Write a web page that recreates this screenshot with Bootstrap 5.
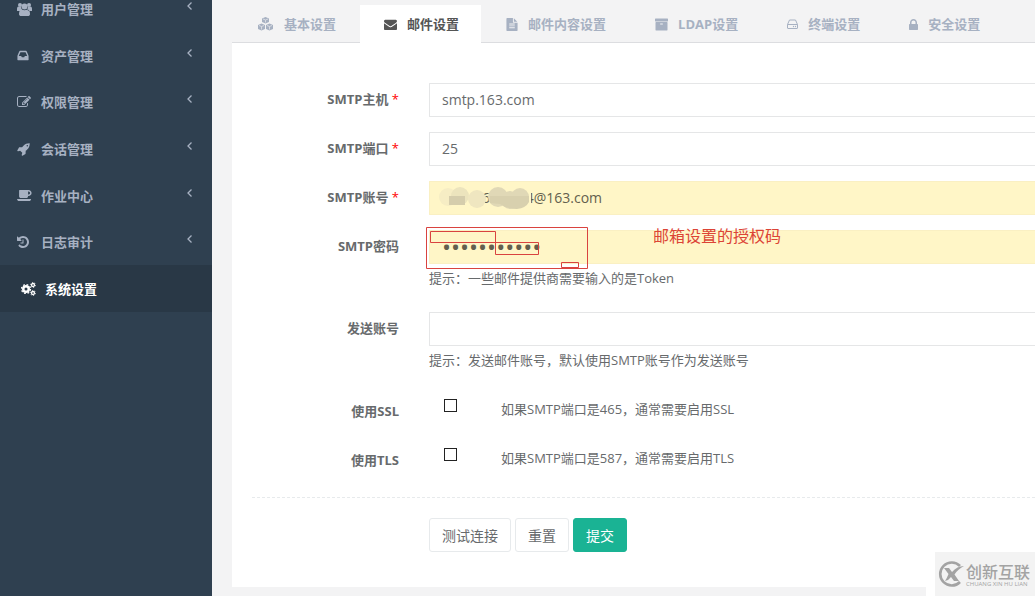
<!DOCTYPE html>
<html lang="zh-CN">
<head>
<meta charset="utf-8">
<meta name="viewport" content="width=device-width, initial-scale=1">
<title>系统设置 - 邮件设置</title>
<link href="https://cdn.jsdelivr.net/npm/bootstrap@5.3.0/dist/css/bootstrap.min.css" rel="stylesheet">
<script defer src="https://cdn.jsdelivr.net/npm/bootstrap@5.3.0/dist/js/bootstrap.bundle.min.js"></script>
<style>
  body { font-family: "Open Sans", "Noto Sans CJK SC", sans-serif; font-size: 13px; line-height: 18px; color: #676a6c; background: #f3f3f4; overflow: hidden; }
  svg { fill: currentColor; flex: none; }
  .sidebar { width: 212px; background: #2f4050; }
  .side-menu { height: 326px; margin-top: -14px; }
  .side-menu a { color: #a7b1c2; font-weight: 600; padding: 0 19px 0 17px; }
  .side-menu .active a { color: #fff; background: #293846; padding-left: 21px; }
  .menu-icon { width: 24px; }
  .chevron { margin-bottom: 6px; }
  .content { padding-left: 20px; }
  .tab-bar { height: 43px; border-bottom: 1px solid #dcdde0; padding-top: 5px; }
  .tab-bar .nav-link { color: #a7b1c2; font-weight: 700; padding: 0 24px 0 25px; gap: 10px; height: 38px; border: 0; border-radius: 0; }
  .tab-bar .nav-link.active { color: #555; background: #fff; padding: 0 22px 0 24px; }
  .panel { padding: 40px 0 35px 20px; }
  .form-line { gap: 30px; margin-bottom: 15px; }
  .line-label { width: 147px; padding-top: 7px; text-align: right; font-weight: 700; }
  .toggle-line .line-label { padding-top: 8px; }
  .req { color: #f00; font-weight: 400; }
  .field { height: 34px; padding: 5px 12px 7px; font-size: 14px; line-height: 20px; color: #676a6c; border: 1px solid #e5e6e7; border-right: 0; border-radius: 1px 0 0 1px; }
  .field.filled { background: #fff6c7; border-color: #faf0c3; color: #635f4e; }
  .field[type=password] { font-size: 24px; }
  .hint { margin: 5px 0 10px; }
  .tick { width: 13px; height: 13px; margin: 5px 44px 0 15px; appearance: none; border: 1px solid #222; background: #fff; border-radius: 0; }
  .tick:checked { background: #1ab394; }
  .toggle-line { height: 34px; }
  .toggle-line .hint { margin: 6px 0 0; }
  .rule { border-top: 1px dashed #e7eaec; margin: 20px 0; }
  .actions { gap: 4px; padding-left: 177px; }
  .actions .btn { height: 34px; padding: 0 12px; font-size: 14px; border-radius: 3px; }
  .btn-plain { color: #676a6c; background: #fff; border-color: #e7eaec; }
  .btn-send { color: #fff; background: #1ab394; border-color: #1ab394; }
  .smudge { left: 8px; top: 3px; }
  .marks { left: -3px; top: -4px; color: #d9433f; }
  .note { left: 224px; top: -4px; font-size: 16px; line-height: 20px; color: #dc4436; }
  .brand-stamp { right: 0; bottom: 0; width: 109px; height: 44px; background: #f3f3f3; border-left: 9px solid #fff; color: #a3a3a3; padding-left: 2px; gap: 1px; }
  .brand-name { font-size: 16px; line-height: 24px; font-weight: 500; }
  .brand-sub { font-size: 6px; line-height: 8px; margin-top: -4px; }
</style>
</head>
<body>
<div class="d-flex vh-100">
  <nav class="sidebar flex-shrink-0 overflow-hidden" aria-label="主菜单">
    <ul class="side-menu list-unstyled d-flex flex-column mb-0">
      <li class="flex-fill d-flex"><a href="#" class="d-flex w-100 align-items-center text-decoration-none">
        <span class="menu-icon d-flex"><svg width="15" height="14" viewBox="0 0 30 28"><circle cx="6" cy="6" r="4"/><circle cx="24" cy="6" r="4"/><circle cx="15" cy="9" r="6"/><path d="M0 18v-4c0-3 1-5 3-5 2 1 4 1 5 0 0 3 1 5 3 7-2 0-4 1-5 2H2zM30 18v-4c0-3-1-5-3-5-2 1-4 1-5 0 0 3-1 5-3 7 2 0 4 1 5 2h4zM4 24c0-6 2-9 6-9 3 2 7 2 10 0 4 0 6 3 6 9 0 3-2 4-4 4H8c-2 0-4-1-4-4z"/></svg></span>用户管理
        <svg class="chevron ms-auto" width="7" height="10" viewBox="0 0 7 10"><path d="M5.500 1.500 2 5l3.500 3.500" fill="none" stroke="currentColor" stroke-width="1.300"/></svg></a></li>
      <li class="flex-fill d-flex"><a href="#" class="d-flex w-100 align-items-center text-decoration-none">
        <span class="menu-icon d-flex"><svg width="12" height="13" viewBox="128 0 1536 1792"><path d="M1151 960h316q-1-3-2.500-8t-2.500-8l-212-496h-708l-212 496q-1 2-2.500 8t-2.500 8h316l95 192h320zm513 30v482q0 26-19 45t-45 19h-1408q-26 0-45-19t-19-45v-482q0-62 25-123l238-552q10-25 36.500-42t52.500-17h832q26 0 52.500 17t36.500 42l238 552q25 61 25 123z"/></svg></span>资产管理
        <svg class="chevron ms-auto" width="7" height="10" viewBox="0 0 7 10"><path d="M5.500 1.500 2 5l3.500 3.500" fill="none" stroke="currentColor" stroke-width="1.300"/></svg></a></li>
      <li class="flex-fill d-flex"><a href="#" class="d-flex w-100 align-items-center text-decoration-none">
        <span class="menu-icon d-flex"><svg width="14" height="14" viewBox="0 0 1792 1792"><path d="M888 1184l116-116-152-152-116 116v56h96v96h56zm440-720q-16-16-33 1l-350 350q-17 17-1 33t33-1l350-350q17-17 1-33zm80 594v190q0 119-84.500 203.500t-203.500 84.500h-832q-119 0-203.500-84.500t-84.500-203.500v-832q0-119 84.500-203.500t203.500-84.500h832q63 0 117 25 15 7 18 23 3 17-9 29l-49 49q-14 14-32 8-23-6-45-6h-832q-66 0-113 47t-47 113v832q0 66 47 113t113 47h832q66 0 113-47t47-113v-126q0-13 9-22l64-64q15-15 35-7t20 29zm-96-738l288 288-672 672h-288v-288zm444 132l-92 92-288-288 92-92q28-28 68-28t68 28l152 152q28 28 28 68t-28 68z"/></svg></span>权限管理
        <svg class="chevron ms-auto" width="7" height="10" viewBox="0 0 7 10"><path d="M5.500 1.500 2 5l3.500 3.500" fill="none" stroke="currentColor" stroke-width="1.300"/></svg></a></li>
      <li class="flex-fill d-flex"><a href="#" class="d-flex w-100 align-items-center text-decoration-none">
        <span class="menu-icon d-flex"><svg width="13" height="13" viewBox="0 100 1700 1700"><path d="M1440 448q0-40-28-68t-68-28-68 28-28 68 28 68 68 28 68-28 28-68zm224-288q0 249-75.500 430.500t-253.500 360.500q-81 80-195 176l-20 379q-2 16-16 26l-384 224q-7 4-16 4-12 0-23-9l-64-64q-13-14-8-32l85-276-281-281-276 85q-3 1-9 1-14 0-23-9l-64-64q-17-19-5-39l224-384q10-14 26-16l379-20q96-114 176-195 188-187 358-258t431-71q14 0 24 9.500t10 22.500z"/></svg></span>会话管理
        <svg class="chevron ms-auto" width="7" height="10" viewBox="0 0 7 10"><path d="M5.500 1.500 2 5l3.500 3.500" fill="none" stroke="currentColor" stroke-width="1.300"/></svg></a></li>
      <li class="flex-fill d-flex"><a href="#" class="d-flex w-100 align-items-center text-decoration-none">
        <span class="menu-icon d-flex"><svg width="15" height="13" viewBox="0 128 1900 1664"><path d="M1664 640q0-80-56-136t-136-56h-64v384h64q80 0 136-56t56-136zm-1664 768h1792q0 106-75 181t-181 75h-1280q-106 0-181-75t-75-181zm1856-768q0 159-112.500 271.500t-271.500 112.500h-64v32q0 92-66 158t-158 66h-704q-92 0-158-66t-66-158v-736q0-26 19-45t45-19h1152q159 0 271.500 112.500t112.500 271.500z"/></svg></span>作业中心
        <svg class="chevron ms-auto" width="7" height="10" viewBox="0 0 7 10"><path d="M5.500 1.500 2 5l3.500 3.500" fill="none" stroke="currentColor" stroke-width="1.300"/></svg></a></li>
      <li class="flex-fill d-flex"><a href="#" class="d-flex w-100 align-items-center text-decoration-none">
        <span class="menu-icon d-flex"><svg width="12" height="12" viewBox="128 128 1536 1536"><path d="M1664 896q0 156-61 298t-164 245-245 164-298 61q-172 0-327-72.500t-264-204.500q-7-10-6.500-22.500t8.500-20.500l137-138q10-9 25-9 16 2 23 12 73 95 179 147t225 52q104 0 198.500-40.500t163.500-109.500 109.500-163.500 40.500-198.500-40.500-198.500-109.500-163.500-163.500-109.500-198.500-40.500q-98 0-188 35.500t-160 101.500l137 138q31 30 14 69-17 40-59 40h-448q-26 0-45-19t-19-45v-448q0-42 40-59 39-17 69 14l130 129q107-101 244.500-156.500t284.500-55.500q156 0 298 61t245 164 164 245 61 298zM960 608v448q0 14-9 23t-23 9h-320q-14 0-23-9t-9-23v-64q0-14 9-23t23-9h224v-352q0-14 9-23t23-9h64q14 0 23 9t9 23z"/></svg></span>日志审计
        <svg class="chevron ms-auto" width="7" height="10" viewBox="0 0 7 10"><path d="M5.500 1.500 2 5l3.500 3.500" fill="none" stroke="currentColor" stroke-width="1.300"/></svg></a></li>
      <li class="flex-fill d-flex active"><a href="#" aria-current="page" class="d-flex w-100 align-items-center text-decoration-none">
        <span class="menu-icon d-flex"><svg width="15" height="14" viewBox="0 0 30 28"><g fill="none" stroke="currentColor"><circle cx="10" cy="14" r="5.500" stroke-width="5"/><circle cx="10" cy="14" r="9" stroke-width="2.500" stroke-dasharray="3.500 3.570"/><circle cx="24" cy="6" r="3" stroke-width="2.600"/><circle cx="24" cy="6" r="5" stroke-width="1.600" stroke-dasharray="2.500 2.700"/><circle cx="24" cy="22" r="3" stroke-width="2.600"/><circle cx="24" cy="22" r="5" stroke-width="1.600" stroke-dasharray="2.500 2.700"/></g></svg></span>系统设置</a></li>
    </ul>
  </nav>

  <main class="content flex-grow-1 overflow-hidden">
    <ul class="nav tab-bar flex-nowrap text-nowrap">
      <li class="nav-item"><a href="#" class="nav-link d-flex align-items-center"><svg width="17" height="14" viewBox="0 0 32 28"><path d="M16 0l7 3v7l-7 3-7-3V3zM8 13l7 3v8l-7 3-7-3v-8zM24 13l7 3v8l-7 3-7-3v-8z"/><path d="M11 4l5 2 5-2M16 6.500V11M3 17l5 2 5-2M8 19.500V25M19 17l5 2 5-2M24 19.500V25" fill="none" stroke="#f3f3f4" stroke-width="1.300"/></svg>基本设置</a></li>
      <li class="nav-item"><a href="#" class="nav-link active d-flex align-items-center" aria-current="page"><svg width="13" height="13" viewBox="0 0 1792 1792"><path d="M1792 710v794q0 66-47 113t-113 47h-1472q-66 0-113-47t-47-113v-794q44 49 101 87 362 246 497 345 57 42 92.500 65.500t94.500 48 110 24.500h2q51 0 110-24.500t94.500-48 92.500-65.500q170-123 498-345 57-39 100-87zm0-294q0 79-49 151t-122 123q-376 261-468 325-10 7-42.500 31t-54 38.500-52 32.500-57.500 27-50 9h-2q-23 0-50-9t-57.500-27-52-32.500-54-38.500-42.500-31q-91-64-262-182.500t-205-142.500q-62-42-117-115.500t-55-136.500q0-78 41.500-130t118.500-52h1472q65 0 112.500 47t47.500 113z"/></svg>邮件设置</a></li>
      <li class="nav-item"><a href="#" class="nav-link d-flex align-items-center"><svg width="12" height="13" viewBox="128 0 1536 1792"><path d="M1596 476q14 14 28 36h-472v-472q22 14 36 28zm-476 164h544v1056q0 40-28 68t-68 28h-1344q-40 0-68-28t-28-68v-1600q0-40 28-68t68-28h800v544q0 40 28 68t68 28zm160 736v-64q0-14-9-23t-23-9h-704q-14 0-23 9t-9 23v64q0 14 9 23t23 9h704q14 0 23-9t9-23zm0-256v-64q0-14-9-23t-23-9h-704q-14 0-23 9t-9 23v64q0 14 9 23t23 9h704q14 0 23-9t9-23zm0-256v-64q0-14-9-23t-23-9h-704q-14 0-23 9t-9 23v64q0 14 9 23t23 9h704q14 0 23-9t9-23z"/></svg>邮件内容设置</a></li>
      <li class="nav-item"><a href="#" class="nav-link d-flex align-items-center"><svg width="13" height="13" viewBox="64 64 1664 1664"><path d="M1088 832q0-26-19-45t-45-19h-256q-26 0-45 19t-19 45 19 45 45 19h256q26 0 45-19t19-45zm576-192v960q0 26-19 45t-45 19h-1408q-26 0-45-19t-19-45v-960q0-26 19-45t45-19h1408q26 0 45 19t19 45zm64-448v256q0 26-19 45t-45 19h-1536q-26 0-45-19t-19-45v-256q0-26 19-45t45-19h1536q26 0 45 19t19 45z"/></svg>LDAP设置</a></li>
      <li class="nav-item"><a href="#" class="nav-link d-flex align-items-center"><svg width="11" height="12" viewBox="0 0 22 24"><path d="M5 4h12l4 9v7q0 1-1 1H2q-1 0-1-1v-7zM1 13h20" fill="none" stroke="currentColor" stroke-width="2"/><circle cx="13" cy="17" r="1.300"/><circle cx="17" cy="17" r="1.300"/></svg>终端设置</a></li>
      <li class="nav-item"><a href="#" class="nav-link d-flex align-items-center"><svg width="9" height="13" viewBox="320 0 1152 1664"><path d="M640 768h512v-192q0-106-75-181t-181-75-181 75-75 181v192zm832 96v576q0 40-28 68t-68 28h-960q-40 0-68-28t-28-68v-576q0-40 28-68t68-28h32v-192q0-184 132-316t316-132 316 132 132 316v192h32q40 0 68 28t28 68z"/></svg>安全设置</a></li>
    </ul>

    <form class="panel bg-white" onsubmit="return false">
      <div class="form-line d-flex">
        <label class="line-label flex-shrink-0" for="host">SMTP主机 <span class="req">*</span></label>
        <div class="flex-grow-1"><input id="host" type="text" class="form-control field" value="smtp.163.com"></div>
      </div>
      <div class="form-line d-flex">
        <label class="line-label flex-shrink-0" for="port">SMTP端口 <span class="req">*</span></label>
        <div class="flex-grow-1"><input id="port" type="text" class="form-control field" value="25"></div>
      </div>
      <div class="form-line d-flex">
        <label class="line-label flex-shrink-0" for="user">SMTP账号 <span class="req">*</span></label>
        <div class="flex-grow-1 position-relative"><input id="user" type="text" class="form-control field filled" value="00000600.004@163.com">
          <svg class="smudge position-absolute" width="96" height="28" viewBox="0 0 96 28" aria-hidden="true"><path fill="#fff6c7" d="M0 4h47v20H0zM53 4h41v20H53zM47 4h6v5h-6zM47 19h6v5h-6z"/><g fill="#ece4bd"><circle cx="11" cy="13" r="9" fill="#f6edc4"/><circle cx="23" cy="12" r="9"/><circle cx="40" cy="15" r="9" fill="#efe6c0"/></g><path fill="#d5cdac" d="M12 12h16v9H12z"/><g fill="#e0d8b6"><circle cx="61" cy="13" r="10"/><circle cx="73" cy="16" r="9"/><circle cx="83" cy="13" r="9"/></g><path fill="#d8d0ae" d="M53 12h39v6q-3 6-12 7-10 0-17-5l-10-1z"/></svg></div>
      </div>
      <div class="form-line d-flex">
        <label class="line-label flex-shrink-0" for="pass">SMTP密码</label>
        <div class="flex-grow-1 position-relative"><input id="pass" type="password" class="form-control field filled" value="abcdefghijk" autocomplete="off">
          <svg class="marks position-absolute" width="163" height="44" viewBox="0 0 163 44" aria-hidden="true"><g fill="none" stroke="currentColor"><path d="M.5 1.500h161v41H.5zM4.500 5.500h65v11h-65zM69.500 16.500h43v12h-43zM135.500 36.500h17v5h-17z"/></g></svg>
          <span class="note position-absolute text-nowrap">邮箱设置的授权码</span>
          <p class="hint">提示：一些邮件提供商需要输入的是Token</p></div>
      </div>
      <div class="form-line d-flex">
        <label class="line-label flex-shrink-0" for="from">发送账号</label>
        <div class="flex-grow-1"><input id="from" type="text" class="form-control field">
          <p class="hint">提示：发送邮件账号，默认使用SMTP账号作为发送账号</p></div>
      </div>
      <div class="form-line toggle-line d-flex">
        <label class="line-label flex-shrink-0" for="ssl">使用SSL</label>
        <div class="flex-grow-1 d-flex align-items-start"><input id="ssl" type="checkbox" class="tick"><p class="hint">如果SMTP端口是465，通常需要启用SSL</p></div>
      </div>
      <div class="form-line toggle-line d-flex mb-0">
        <label class="line-label flex-shrink-0" for="tls">使用TLS</label>
        <div class="flex-grow-1 d-flex align-items-start"><input id="tls" type="checkbox" class="tick"><p class="hint">如果SMTP端口是587，通常需要启用TLS</p></div>
      </div>
      <div class="rule"></div>
      <div class="actions d-flex">
        <button type="button" class="btn btn-plain">测试连接</button>
        <button type="reset" class="btn btn-plain">重置</button>
        <button type="submit" class="btn btn-send">提交</button>
      </div>
    </form>
  </main>
</div>
<div class="brand-stamp position-fixed d-flex align-items-center">
  <svg width="28" height="28" viewBox="0 0 28 28" aria-hidden="true"><path d="M23 6A11.500 11.500 0 1 0 23 22" fill="none" stroke="currentColor" stroke-width="2.600"/><path d="M7 8h5l3 4q5-6 12-6-6 3-9.500 8.500L22 21h-5l-3-4q-2 3-6 4 2-3 3.500-7z"/></svg>
  <div class="text-nowrap"><div class="brand-name">创新互联</div><div class="brand-sub">CHUANG XIN HU LIAN</div></div>
</div>
</body>
</html>
